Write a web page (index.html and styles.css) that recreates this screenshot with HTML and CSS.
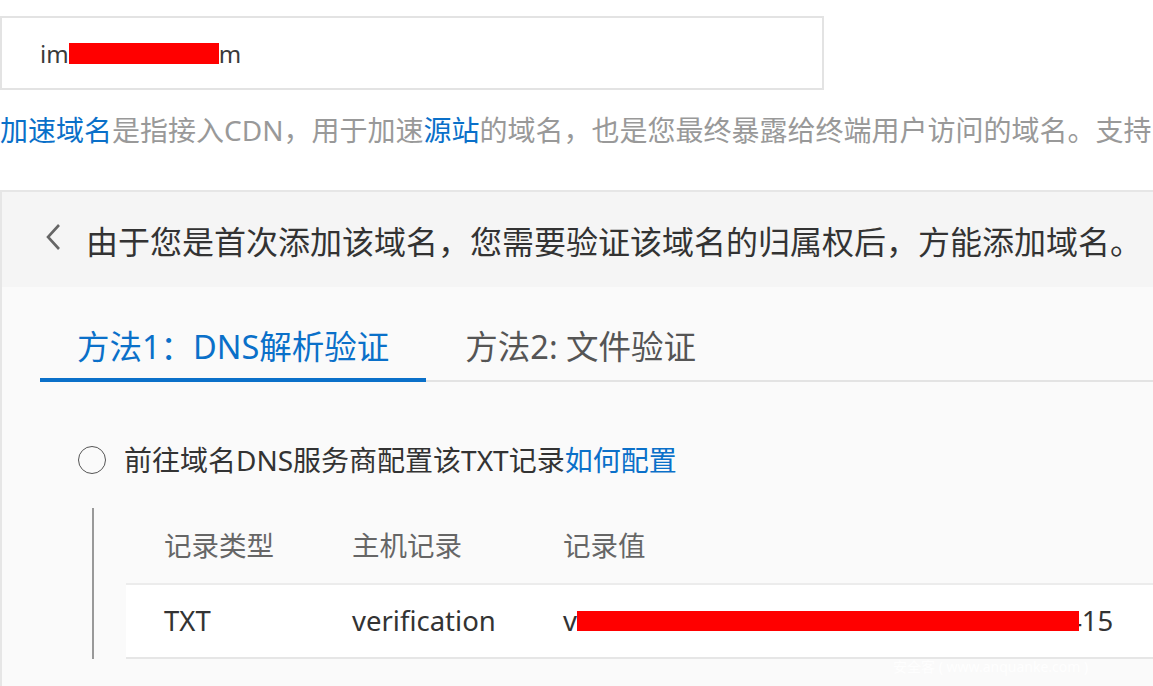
FILE: index.html
```html
<!DOCTYPE html>
<html lang="zh-CN">
<head>
    <meta charset="UTF-8">
    <title>添加域名</title>
    <link rel="stylesheet" href="styles.css">
</head>
<body>
    <div class="page">
        <!-- Domain input -->
        <div class="domain-input">im<span class="redact redact-domain"></span>m</div>

        <p class="hint"><a class="link">加速域名</a>是指接入CDN，用于加速<a class="link">源站</a>的域名，也是您最终暴露给终端用户访问的域名。支持</p>

        <!-- Ownership verification -->
        <div class="verify-panel">
            <div class="panel-head">
                <svg class="back-icon" width="18" height="28" viewBox="0 0 18 28">
                    <polyline points="15,2 4,14 15,26" fill="none" stroke="#666" stroke-width="2.6"/>
                </svg>
                <span>由于您是首次添加该域名，您需要验证该域名的归属权后，方能添加域名。</span>
            </div>

            <div class="panel-body">
                <div class="tabs">
                    <div class="tab active">方法1：DNS解析验证</div>
                    <div class="tab">方法2: 文件验证</div>
                </div>

                <div class="option">
                    <span class="radio"></span>
                    <span>前往域名DNS服务商配置该TXT记录<a class="link">如何配置</a></span>
                </div>

                <div class="records">
                    <div class="record-row record-head">
                        <div class="col col-type">记录类型</div>
                        <div class="col col-host">主机记录</div>
                        <div class="col col-value">记录值</div>
                    </div>
                    <div class="record-row record-item">
                        <div class="col col-type">TXT</div>
                        <div class="col col-host">verification</div>
                        <div class="col col-value">v<span class="redact redact-value"></span>415</div>
                    </div>
                </div>
            </div>
        </div>

        <div class="watermark">安全客 ( www.anquanke.com )</div>
    </div>
</body>
</html>
```

FILE: styles.css
```css
body { margin: 0; background: #fff; font-family: "Noto Sans", "Noto Sans CJK SC", sans-serif; overflow: hidden; }
.page { position: relative; width: 1153px; height: 686px; overflow: hidden; white-space: nowrap; }
.link { color: #0a70c9; text-decoration: none; }
.redact { display: inline-block; flex-shrink: 0; background: #ff0000; vertical-align: middle; }

/* --- Domain input --- */
.domain-input { margin-top: 16px; width: 824px; height: 74px; box-sizing: border-box; border: 2px solid #e3e3e3; padding-left: 38px; display: flex; align-items: center; font-size: 24px; color: #3a3a3a; }
.redact-domain { width: 150px; height: 21px; }

.hint { margin: 20px 0 0; font-size: 28px; line-height: 40px; color: #999; }

/* --- Verify panel --- */
.verify-panel { margin-top: 40px; border-top: 2px solid #e6e6e6; border-left: 2px solid #e6e6e6; background: #fafafa; height: 600px; }
.panel-head { height: 95px; background: #f5f5f5; display: flex; align-items: center; padding-left: 42px; font-size: 32px; color: #333; }
.back-icon { flex-shrink: 0; margin-right: 24px; margin-top: -6px; }

.panel-body { padding-left: 38px; }
.tabs { display: flex; border-bottom: 2px solid #e3e3e3; }
.tab { padding: 38px 37px 9px 37px; font-size: 32.5px; line-height: 44px; color: #555; border-bottom: 4px solid transparent; margin-bottom: -2px; }
.tab + .tab { padding-left: 39px; }
.tab.active { color: #0a70c9; border-bottom-color: #0a70c9; }

.option { margin: 58px 0 0 38px; display: flex; align-items: center; gap: 18px; font-size: 28px; line-height: 40px; color: #333; }
.radio { width: 26px; height: 26px; border: 1.5px solid #555; border-radius: 50%; }

.records { margin: 28px 0 0 52px; border-left: 2px solid #999; padding-left: 32px; }
.record-row { display: flex; font-size: 27.5px; line-height: 40px; }
.record-head { height: 75px; align-items: center; color: #666; }
.record-item { height: 72px; align-items: center; background: #fff; color: #333; border-top: 2px solid #ececec; border-bottom: 2px solid #e6e6e6; }
.col-type { width: 188px; padding-left: 38px; flex-shrink: 0; }
.col-host { width: 211px; flex-shrink: 0; }
.col-value { display: flex; align-items: center; }
.redact-value { width: 502px; height: 20px; margin-right: -13px; position: relative; }

.watermark { position: absolute; left: 893px; top: 656px; font-size: 14px; color: rgba(255,255,255,0.9); }
```
